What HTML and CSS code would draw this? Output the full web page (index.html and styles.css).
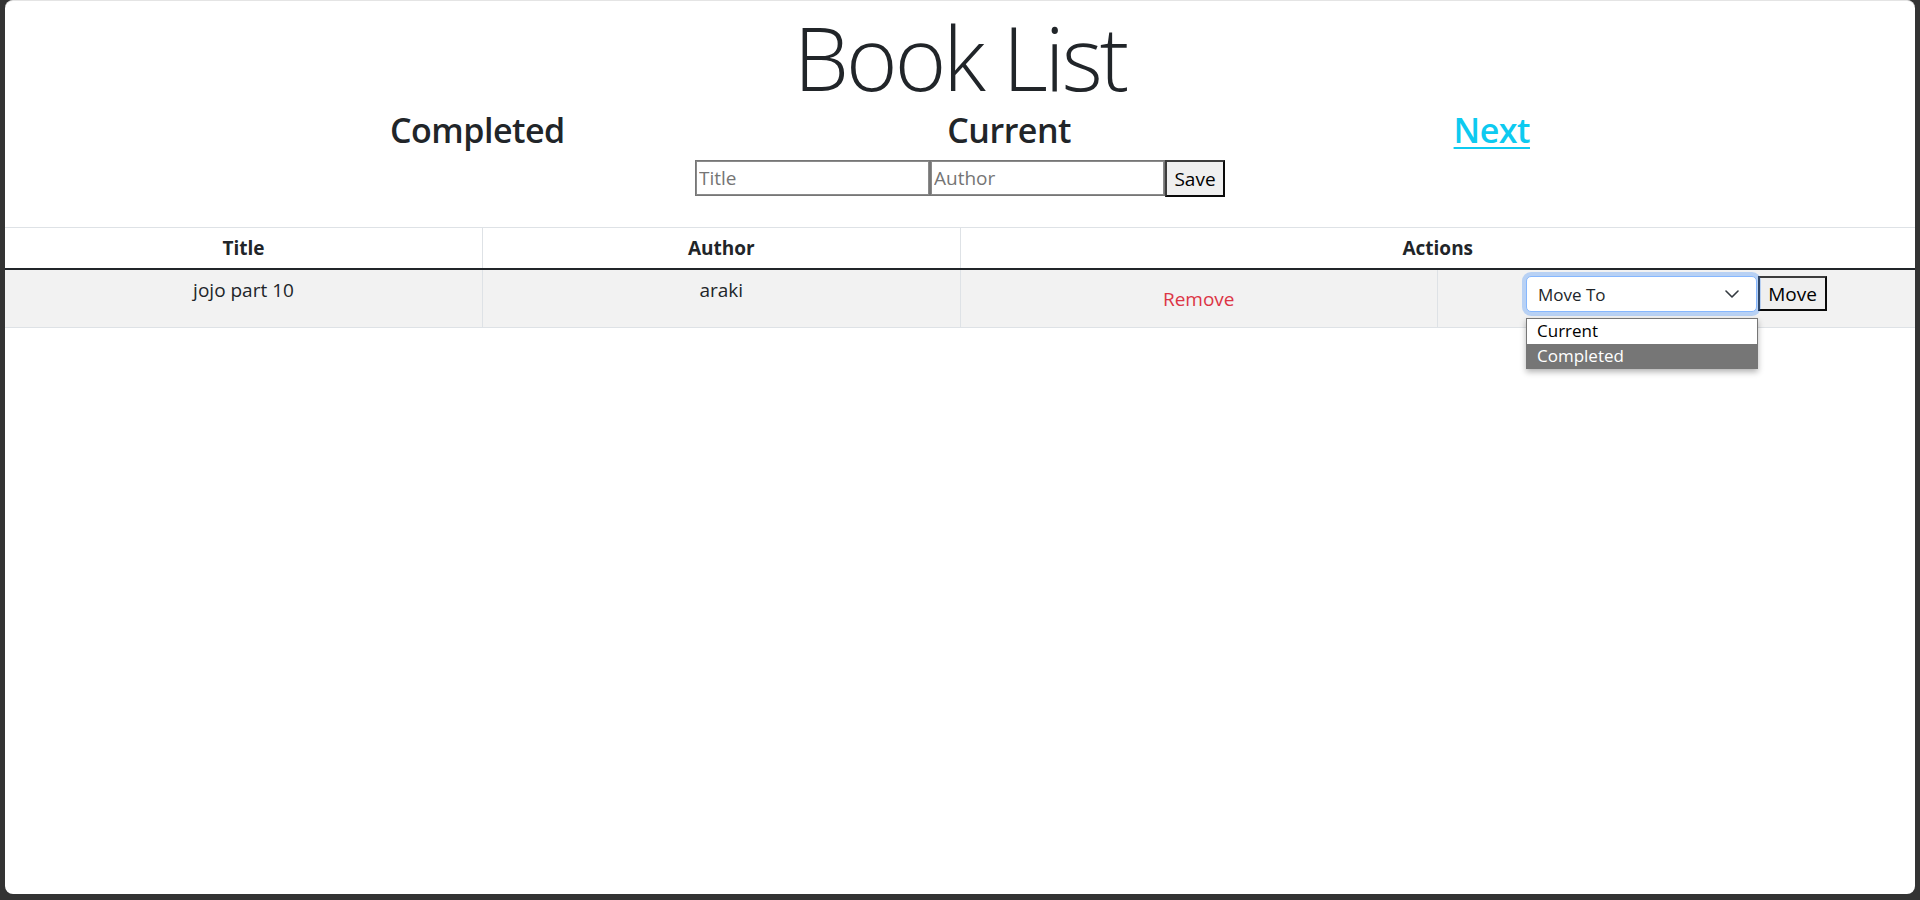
FILE: index.html
```html
<!DOCTYPE html>
<html lang="en">
<head>
<meta charset="utf-8">
<title>Book List</title>
<link rel="stylesheet" href="styles.css">
</head>
<body>
<div class="window">
  <h1 class="title">Book List</h1>
  <nav class="tabs">
    <h3 class="tab">Completed</h3>
    <h3 class="tab">Current</h3>
    <h3 class="tab"><a class="tab-link" href="#">Next</a></h3>
  </nav>
  <form class="add-form">
    <input class="field" type="text" placeholder="Title">
    <input class="field" type="text" placeholder="Author">
    <button class="plain-btn save-btn" type="button">Save</button>
  </form>
  <table class="books">
    <colgroup><col><col><col><col></colgroup>
    <thead>
      <tr>
        <th>Title</th>
        <th>Author</th>
        <th colspan="2">Actions</th>
      </tr>
    </thead>
    <tbody>
      <tr class="book-row">
        <td>jojo part 10</td>
        <td>araki</td>
        <td><button class="remove-btn" type="button">Remove</button></td>
        <td>
          <div class="move">
            <div class="select-wrap">
              <div class="select-box">
                <span class="select-text">Move To</span>
                <svg class="chevron" width="14" height="8" viewBox="0 0 14 8"><path d="M1 1 L7 7 L13 1" fill="none" stroke="#343a40" stroke-width="1.6" stroke-linecap="round" stroke-linejoin="round"/></svg>
              </div>
              <ul class="options">
                <li class="option">Current</li>
                <li class="option option-active">Completed</li>
              </ul>
            </div>
            <button class="plain-btn move-btn" type="button">Move</button>
          </div>
        </td>
      </tr>
    </tbody>
  </table>
</div>
</body>
</html>
```
FILE: styles.css
```css
html, body {
  margin: 0;
  padding: 0;
  height: 100%;
}
body {
  background: #333333;
  padding: 0 5px 6px 5px;
  box-sizing: border-box;
  font-family: "Open Sans", "Noto Sans", sans-serif;
  color: #212529;
}
.window {
  background: #ffffff;
  height: 100%;
  border-top: 1px solid #e4e4e4;
  border-radius: 8px;
  box-sizing: border-box;
  overflow: visible;
}
.title {
  margin: 4px 0 0 0;
  text-align: center;
  font-size: 88px;
  font-weight: 300;
  line-height: 104px;
  letter-spacing: -3px;
}
.tabs {
  width: 1140px;
  margin: 0 auto;
  display: flex;
  justify-content: space-between;
}
.tab {
  margin: 0;
  font-size: 34px;
  font-weight: 600;
  line-height: 42px;
  letter-spacing: -0.5px;
}
.tab-link {
  color: #0dcaf0;
  text-decoration: underline;
  text-decoration-thickness: 2px;
  text-underline-offset: 4px;
}
.add-form {
  margin: 9px 0 0 0;
  display: flex;
  justify-content: center;
}
.field {
  width: 235px;
  height: 36px;
  box-sizing: border-box;
  border: 1px solid #767676;
  outline: 1px solid #8a8a8a;
  outline-offset: -2px;
  padding: 1px 3px;
  font-family: inherit;
  font-size: 19px;
  color: #212529;
  background: #fff;
}
.field::placeholder {
  color: #757575;
}
.plain-btn {
  background: #efefef;
  border-style: solid;
  border-width: 2px;
  border-color: #3c3c3c #0a0a0a #0a0a0a #3c3c3c;
  font-family: inherit;
  font-size: 19px;
  color: #000;
  padding: 0 6px;
  box-sizing: border-box;
}
.save-btn {
  width: 60px;
  height: 37px;
}
.books {
  width: 100%;
  margin-top: 30px;
  border-collapse: collapse;
  table-layout: fixed;
  font-size: 19px;
  line-height: 30px;
}
.books th,
.books td {
  padding: 5px 8px;
  text-align: center;
  vertical-align: top;
  border-left: 1px solid #dee2e6;
}
.books th:first-child,
.books td:first-child {
  border-left: none;
}
.books thead tr {
  border-top: 1px solid #dee2e6;
  border-bottom: 2px solid #212529;
}
.books th {
  font-weight: 700;
}
.book-row {
  background: #f2f2f2;
  border-bottom: 1px solid #dee2e6;
}
.remove-btn {
  background: transparent;
  border: 1px solid transparent;
  padding: 7.5px 15px;
  font-family: inherit;
  font-size: 19px;
  line-height: 30px;
  color: #dc3545;
}
.move {
  display: flex;
  justify-content: center;
  align-items: flex-start;
  padding-top: 1px;
}
.select-wrap {
  position: relative;
}
.select-box {
  width: 231px;
  height: 36px;
  box-sizing: border-box;
  border: 1px solid #86b7fe;
  border-radius: 5px;
  box-shadow: 0 0 0 4px rgba(13, 110, 253, 0.25);
  background: #fff;
  display: flex;
  align-items: center;
  justify-content: space-between;
  padding: 0 17px 0 11px;
  font-size: 17px;
  color: #212529;
  line-height: 1;
}
.chevron {
  display: block;
}
.options {
  position: absolute;
  top: 42px;
  left: 0;
  width: 232px;
  margin: 0;
  padding: 0;
  list-style: none;
  background: #fff;
  border: 1px solid #767676;
  box-sizing: border-box;
  box-shadow: 0 3px 6px rgba(0, 0, 0, 0.3);
  text-align: left;
  z-index: 5;
}
.option {
  height: 24.5px;
  line-height: 24px;
  padding: 0 10px;
  font-size: 17px;
  color: #000;
}
.option-active {
  background: #767676;
  color: #fff;
}
.move-btn {
  width: 69px;
  height: 35px;
  margin-left: 1px;
}
```
